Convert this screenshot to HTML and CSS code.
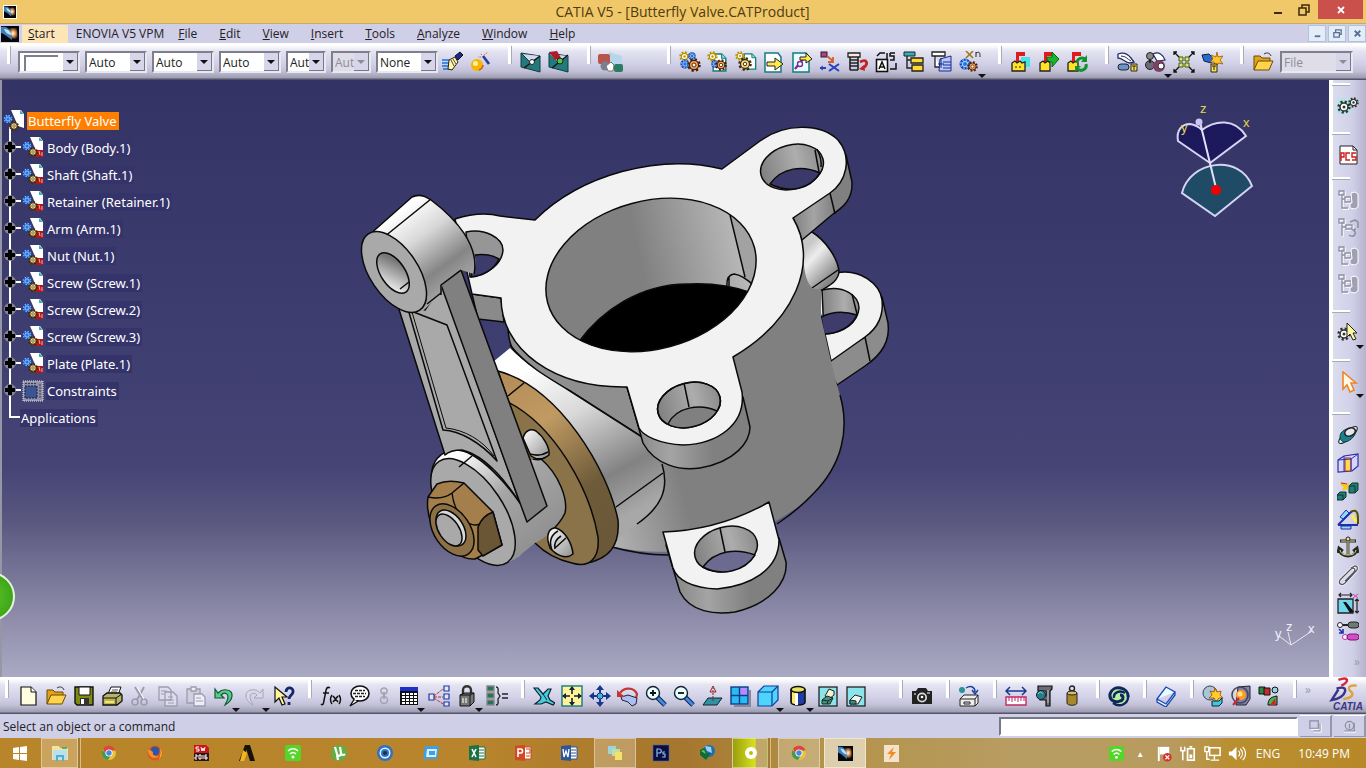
FILE: index.html
```
<!DOCTYPE html>
<html lang="en">
<head>
    <meta charset="UTF-8">
    <meta name="viewport" content="width=device-width, initial-scale=1.0">
    <title>CATIA V5 - [Butterfly Valve.CATProduct]</title>
    <link rel="stylesheet" href="styles.css">
</head>
<body>
    <!-- icon sprite -->
    <svg class="sprite" aria-hidden="true">
        <defs>
            <radialGradient id="glow" cx=".55" cy=".45" r=".55">
                <stop offset="0" stop-color="#fff"/><stop offset=".35" stop-color="#f5a35a"/><stop offset="1" stop-color="#05070d"/>
            </radialGradient>
        </defs>
        <symbol id="catia" viewBox="0 0 18 16" preserveAspectRatio="none"><rect width="18" height="16" fill="#05070d"/><path d="M6 2h10l1 12-7-2z" fill="url(#glow)"/><path d="M0 1c5-1 8 1 10 5l1 8C8 12 4 8 0 7z" fill="#3d7fb8"/><path d="M3 3c4 0 6 2 8 6-4 0-7-3-8-6z" fill="#b9e0f6"/></symbol>
        <symbol id="gear" viewBox="0 0 12 12"><circle cx="6" cy="6" r="4.5" fill="none" stroke="currentColor" stroke-width="2.4" stroke-dasharray="1.8 1.73"/><circle cx="6" cy="6" r="3.4" fill="#fff" stroke="currentColor" stroke-width="1.3"/><circle cx="6" cy="6" r="1.3" fill="currentColor"/></symbol>
        <symbol id="bgear" viewBox="0 0 12 12"><circle cx="6" cy="6" r="5.500" fill="#1746a8"/><circle cx="6" cy="6" r="4.300" fill="none" stroke="#6fb2ff" stroke-width="1.600" stroke-dasharray="1.800 1.580"/><circle cx="6" cy="6" r="2.600" fill="#2a6fe8" stroke="#9fd0ff" stroke-width="1.200"/></symbol>
        <symbol id="ygear" viewBox="0 0 12 12"><circle cx="6" cy="6" r="4.5" fill="none" stroke="#3d2b00" stroke-width="2.6" stroke-dasharray="1.8 1.73"/><circle cx="6" cy="6" r="3.8" fill="#ffd98a" stroke="#3d2b00" stroke-width="1"/><circle cx="6" cy="6" r="1.5" fill="#fff" stroke="#3d2b00" stroke-width=".8"/></symbol>
        <symbol id="ogear" viewBox="0 0 12 12"><circle cx="6" cy="6" r="4.5" fill="none" stroke="#4a1f00" stroke-width="2.6" stroke-dasharray="1.8 1.73"/><circle cx="6" cy="6" r="3.900" fill="#f3a25a" stroke="#4a1f00" stroke-width="1"/><circle cx="6" cy="6" r="1.700" fill="#fff" stroke="#4a1f00" stroke-width=".8"/></symbol>
        <symbol id="doc" viewBox="0 0 14 18"><path d="M1 1h8l4 4v12H1z" fill="#fff" stroke="#127c80" stroke-width="1.4"/><path d="M9 1v4h4" fill="#7fe6e6" stroke="#127c80"/></symbol>
        <symbol id="tree-product" viewBox="0 0 22 22"><path d="M8 0h10l3 4v14l-6-2z" fill="#fff"/><path d="M17 0l4 4h-4z" fill="#37b0b8"/><use href="#bgear" x="0" y="4" width="10" height="10"/><use href="#ygear" x="6" y="11" width="10" height="10"/></symbol>
        <symbol id="tree-part" viewBox="0 0 22 22"><path d="M8 0h10l3 4v14l-6-2z" fill="#fff"/><path d="M17 0l4 4h-4z" fill="#37b0b8"/><path d="M13 13h8v7h-8z" fill="#b81616"/><path d="M17 14l1 4M20 15v4" stroke="#f0b0a0"/><use href="#bgear" x="0" y="4" width="10" height="10"/><use href="#ygear" x="6" y="10" width="10" height="10"/></symbol>
        <symbol id="tree-constraints" viewBox="0 0 22 22"><rect x="1" y="1" width="20" height="20" fill="#8f8fa6" stroke="#e2e2ea" stroke-dasharray="1 1"/><rect x="3" y="6" width="12" height="12" fill="#3c5590" stroke="#0c1c50" stroke-dasharray="2 1"/><path d="M18 4v15M3 3.500h12" stroke="#3a3a4a" stroke-dasharray="2 1"/></symbol>

        <!-- top toolbar -->
        <symbol id="brush" viewBox="0 0 22 22"><path d="M0 9h8M0 12h10M0 15h12M1 18h9" stroke="#1673e0" stroke-width="1.6"/><path d="M7 9l6-3 3 5-6 8-4-1z" fill="#fff6a8" stroke="#222"/><path d="M9 9l3 6M11 8l3 5" stroke="#222" stroke-width=".8"/><path d="M13 5l5-4 3 3-5 5z" fill="#182a8c" stroke="#111"/></symbol>
        <symbol id="wand" viewBox="0 0 22 22"><circle cx="7" cy="14" r="6" fill="#f6b500"/><circle cx="5.500" cy="12.500" r="2.500" fill="#fff3a0"/><path d="M9 19a6 6 0 0 0 4-5" stroke="#d2551b" fill="none" stroke-width="1.500"/><path d="M13 5l6 8" stroke="#2b3d96" stroke-width="2.600"/><path d="M12 4l-2-2M14 4l4-3M11 6H8" stroke="#d96a38" stroke-dasharray="1.500 1"/></symbol>
        <symbol id="bowtie" viewBox="0 0 22 22"><path d="M1 2l19 3v16L1 16z" fill="#24797d" stroke="#103f42"/><path d="M2 3l8 8 10-6z" fill="#d9d8ea"/><path d="M1 2l9 9" stroke="#103f42"/><path d="M4 17L20 5" stroke="#111" stroke-width="1.400"/><circle cx="12" cy="11" r="2.500" fill="#fff" stroke="#222"/></symbol>
        <symbol id="bowtie-x" viewBox="0 0 22 22"><path d="M1 2l19 3v16L1 16z" fill="#24797d" stroke="#103f42"/><path d="M2 3l8 8 10-6z" fill="#d9d8ea"/><path d="M1 1l8-1 4 7-6 2z" fill="#b0182c"/><path d="M4 17L20 4" stroke="#111" stroke-width="1.400"/><circle cx="12" cy="10" r="3" fill="#47c947" stroke="#222"/></symbol>
        <symbol id="render" viewBox="0 0 26 22"><path d="M12 1l13 4v12l-13-4z" fill="#b7d6ea"/><rect x="1" y="3" width="12" height="10" rx="2" fill="#b9554f"/><circle cx="8" cy="15" r="4.500" fill="#7a7f96"/><rect x="17" y="13" width="9" height="8" rx="2" fill="#2c7b64"/><path d="M9 15l5-4 3 3-1 6h-5z" fill="#fff" stroke="#777"/></symbol>
        <symbol id="gears" viewBox="0 0 22 22"><use href="#gear" x="0" y="0" width="11" height="11" color="#b79300"/><use href="#bgear" x="1" y="8" width="10" height="10"/><use href="#bgear" x="9" y="1" width="8" height="8"/><use href="#ogear" x="8" y="7" width="14" height="14"/></symbol>
        <symbol id="gear-doc" viewBox="0 0 22 22"><use href="#doc" x="4" y="2" width="17" height="19"/><use href="#gear" x="0" y="0" width="11" height="11" color="#b79300"/><use href="#bgear" x="4" y="9" width="8" height="8"/><use href="#ogear" x="8" y="8" width="12" height="12"/></symbol>
        <symbol id="gear-doc2" viewBox="0 0 22 22"><use href="#doc" x="8" y="2" width="14" height="17"/><use href="#gear" x="0" y="0" width="10" height="10" color="#b79300"/><use href="#ygear" x="3" y="6" width="14" height="14"/></symbol>
        <symbol id="doc-arrow" viewBox="0 0 22 22"><path d="M2 2h13l3 4v15H2z" fill="#fff" stroke="#127c80" stroke-width="1.500"/><path d="M4 11h8V7l8 6-8 6v-4H4z" fill="#ffe94d" stroke="#222"/></symbol>
        <symbol id="doc-arrow2" viewBox="0 0 22 22"><path d="M2 2h13l3 4v15H2z" fill="#eafcff" stroke="#127c80" stroke-width="1.500"/><path d="M4 18l4-5 5-6" stroke="#7a2a9c" fill="none" stroke-width="2.200"/><path d="M9 6h6V2l6 6-6 4V9H9z" fill="#ffe94d" stroke="#222"/><circle cx="9" cy="13" r="2.500" fill="#fff" stroke="#7a2a9c" stroke-width="1.400"/></symbol>
        <symbol id="reorder" viewBox="0 0 22 22"><rect x="2" y="1" width="6" height="5" fill="#b43c8c" stroke="#222"/><path d="M8 5l6 5m0-4v5h-5" stroke="#d0602a" fill="none" stroke-width="1.800"/><path d="M1 17h6M10 13l10 7M10 20l10-7" stroke="#2443b8" stroke-width="2"/><path d="M4 15l-3 2 3 2" fill="none" stroke="#2443b8"/></symbol>
        <symbol id="list-red" viewBox="0 0 22 22"><path d="M1 2h12v4H1z" fill="#f3efe0" stroke="#222" stroke-width="1.300"/><path d="M3 9h8M3 12h8M3 15h8M3 19h8M3 6v13M11 6v13" stroke="#222" stroke-width="1.600"/><path d="M13 11c7-4 9 2 3 6" stroke="#c22222" fill="none" stroke-width="2.800"/><path d="M12 18l5-4 1 6z" fill="#c22222"/></symbol>
        <symbol id="numbering" viewBox="0 0 22 22"><rect x="1.500" y="8.500" width="11" height="12" fill="#fff" stroke="#111" stroke-width="1.600"/><path d="M4 18l3-7 3 7M5 16h4" stroke="#111" fill="none" stroke-width="1.500"/><path d="M12 2v7M15 2h5M15 2v3h4v4h-4M2 5l3-3h5M21 12v6h-6" stroke="#111" fill="none" stroke-width="1.500"/></symbol>
        <symbol id="tree-yellow" viewBox="0 0 22 22"><path d="M1 1h11v4H1z" fill="#2fb1b8" stroke="#222"/><path d="M4 5v12h5M4 9h5" stroke="#222" fill="none" stroke-width="1.400"/><path d="M8 7h12v5H8zM9 14h11v6H9z" fill="#ffd92f" stroke="#222" stroke-width="1.300"/></symbol>
        <symbol id="tree-blue" viewBox="0 0 22 22"><path d="M1 1h13v4H1zM4 5v11h5" fill="#fff" stroke="#222" stroke-width="1.300"/><path d="M9 8l11-3v15H8z" fill="#b9c8ff" stroke="#1b2a88"/><path d="M10 7v10M7 13h6M12 11h8M12 14h8M12 17h8" stroke="#1b2a88"/></symbol>
        <symbol id="multi" viewBox="0 0 22 22"><path d="M7 0l7 7M14 0L7 7" stroke="#a07b1c" stroke-width="1.600"/><path d="M17 6V1m0 1c4-2 4 0 4 4" stroke="#223" fill="none"/><use href="#bgear" x="0" y="7" width="12" height="12"/><use href="#ogear" x="8" y="10" width="11" height="11"/></symbol>
        <symbol id="store" viewBox="0 0 22 22"><path d="M6 1h9v4h-6v7H6z" fill="#e11b1b"/><path d="M11 6h9v10h-9z" fill="#49e2e6"/><path d="M2 12l3-2 2 2 3-2 2 2 3-1v9H2z" fill="#ffe326" stroke="#222" stroke-width="1.300"/><path d="M5 16h2M9 16h2" stroke="#222"/></symbol>
        <symbol id="store-arrow" viewBox="0 0 22 22"><path d="M6 1h9v4h-6v7H6z" fill="#e11b1b"/><path d="M9 6h5V1l7 7-7 8v-5H9z" fill="#17b52a" stroke="#0b6414"/><path d="M2 12l3-2 2 2 3-2 2 2v8H2z" fill="#ffe326" stroke="#222" stroke-width="1.300"/></symbol>
        <symbol id="store-sync" viewBox="0 0 22 22"><path d="M6 1h9v4h-6v7H6z" fill="#e11b1b"/><path d="M2 12l3-2 2 2 3-2 2 2v8H2z" fill="#ffe326" stroke="#222" stroke-width="1.300"/><path d="M11 12a5 5 0 0 1 8-4M20 13a5 5 0 0 1-9 4" stroke="#12922a" stroke-width="3" fill="none"/><path d="M21 4v7h-6zM9 21v-6h6z" fill="#12922a"/></symbol>
        <symbol id="hand" viewBox="0 0 22 22"><path d="M1 3c5-2 9-1 13 4l3 4-4 1C8 12 6 7 1 7z" fill="#fff" stroke="#222b66" stroke-width="1.300"/><path d="M4 5c5 0 6 3 10 5" fill="none" stroke="#222b66"/><rect x="1" y="13" width="11" height="6" rx="3" fill="#6a93c8" stroke="#223"/><path d="M14 13h6v7h-6z" fill="#ffe04a" stroke="#222"/><path d="M15 15h4M17 15v4" stroke="#222"/></symbol>
        <symbol id="hand-ball" viewBox="0 0 22 22"><path d="M8 3c6-3 10 1 12 6l-8 1z" fill="#fff" stroke="#222b66" stroke-width="1.200"/><circle cx="5" cy="5" r="3.500" fill="#888" stroke="#222"/><circle cx="5" cy="14" r="4.500" fill="#6b6b78" stroke="#222"/><path d="M5 8v4" stroke="#222" stroke-width="2"/><circle cx="14" cy="15" r="6" fill="#7d4066"/><circle cx="16" cy="15" r="3" fill="#fff" stroke="#333"/></symbol>
        <symbol id="explode" viewBox="0 0 22 22"><path d="M1 1l5 5M21 1l-5 5M1 21l5-5M21 21l-5-5M1 4V1h3M18 1h3v3M1 18v3h3M18 21h3v-3" stroke="#111" fill="none" stroke-width="1.300"/><path d="M6 6h4v4H6zM12 6h4v4h-4zM6 12h4v4H6zM12 12h4v4h-4z" fill="#e9e35a" stroke="#3b5a1b"/></symbol>
        <symbol id="clash" viewBox="0 0 22 22"><path d="M1 4l7-1 5 5-3 4-7-2z" fill="#276ad4" stroke="#123"/><path d="M16 1l1 5 5-1-3 4 3 4-5-1-2 4-2-5-4 0 3-3-2-4 5 2z" fill="#ffc52a" stroke="#9a5a00" stroke-width=".8"/><path d="M10 13h6v8h-6z" fill="#ffe04a" stroke="#222"/><path d="M11 15h4M13 15v4" stroke="#222"/></symbol>
        <symbol id="folder" viewBox="0 0 22 22"><path d="M2 19V5h6l2 2h8v4" fill="#e0a31a" stroke="#6b4a00"/><path d="M2 19l4-9h15l-4 9z" fill="#ffd34e" stroke="#6b4a00"/><path d="M12 3c3-2 6-1 7 2" fill="none" stroke="#333"/></symbol>

        <!-- bottom toolbar -->
        <symbol id="new" viewBox="0 0 22 22"><path d="M4 2h10l5 5v13H4z" fill="#fffde0" stroke="#111" stroke-width="1.200"/><path d="M14 2v5h5" fill="#fff" stroke="#111"/></symbol>
        <symbol id="save" viewBox="0 0 22 22"><path d="M2 2h18v18H4l-2-2z" fill="#7f8a12" stroke="#111" stroke-width="1.400"/><path d="M6 2h11v8H6z" fill="#fff" stroke="#111"/><path d="M7 13h9v7H7z" fill="#333"/><path d="M8 14h3v5H8z" fill="#fff"/></symbol>
        <symbol id="print" viewBox="0 0 22 22"><path d="M7 9l3-7h10l-3 8z" fill="#fff" stroke="#111"/><path d="M11 5h6M10 7h6" stroke="#555"/><path d="M2 11l4-3h13l2 2v6l-5 4H2z" fill="#b7b46a" stroke="#111" stroke-width="1.300"/><path d="M2 13h13v7M15 13l6-4" fill="none" stroke="#111"/><path d="M4 16h9v2H4z" fill="#ffe84a"/></symbol>
        <symbol id="cut" viewBox="0 0 22 22"><path d="M6 2l8 13M15 2L8 15" stroke="#9c9cae" stroke-width="2"/><circle cx="6" cy="17" r="3" fill="none" stroke="#9c9cae" stroke-width="1.600"/><circle cx="15" cy="17" r="3" fill="none" stroke="#9c9cae" stroke-width="1.600"/><path d="M8 2l7 12" stroke="#fff"/></symbol>
        <symbol id="copy" viewBox="0 0 22 22"><path d="M2 2h9l3 3v10H2zM8 7h8l4 4v10H8z" fill="#dddcec" stroke="#9c9cae" stroke-width="1.300"/><path d="M4 6h6M4 9h3M11 12h5M11 15h6M11 18h6" stroke="#9c9cae"/></symbol>
        <symbol id="paste" viewBox="0 0 22 22"><path d="M2 4h13v14H2z" fill="#d0cfe0" stroke="#9c9cae" stroke-width="1.300"/><path d="M6 2h5v4H6zM9 9h8l3 3v9H9z" fill="#eeeef8" stroke="#9c9cae" stroke-width="1.300"/><path d="M11 13h5M11 16h7" stroke="#9c9cae"/></symbol>
        <symbol id="undo" viewBox="0 0 22 22"><path d="M2 4v9h9L8 10c4-4 9-1 6 6l-2 4c9-5 9-14 2-15-4-1-7 1-9 3z" fill="#5fc98a" stroke="#0f5a38" stroke-width="1.200"/></symbol>
        <symbol id="redo" viewBox="0 0 22 22"><path d="M20 4v9h-9l3-3c-4-4-9-1-6 6l2 4C1 15 1 6 8 5c4-1 7 1 9 3z" fill="#d9d8e8" stroke="#a6a5b8"/></symbol>
        <symbol id="whats" viewBox="0 0 22 22"><path d="M2 2v15l4-4 3 7 3-1-3-7h5z" fill="#fff59a" stroke="#111" stroke-width="1.200"/><path d="M13 7c0-6 8-5 7 0 0 3-4 3-4 7M16 17v3" stroke="#13256e" fill="none" stroke-width="2.800"/></symbol>
        <symbol id="fx" viewBox="0 0 22 22"><path d="M10 3c-3-2-4 1-4.500 5l-2 10c-.5 2-1.500 2-2.500 1M3 8h6M12 10c-2 3-2 6 0 9M19 10c2 3 2 6 0 9M13 11l5 6M18 11l-5 6" fill="none" stroke="#111" stroke-width="1.500"/></symbol>
        <symbol id="comment" viewBox="0 0 22 22"><path d="M7 13l-5 8 10-6z" fill="#fff" stroke="#111" stroke-width="1.400"/><ellipse cx="12" cy="8.500" rx="9" ry="7.500" fill="#fff" stroke="#111" stroke-width="1.600"/><path d="M7 15l3-2" stroke="#fff" stroke-width="2"/><path d="M7 5.500h10M5 8.500h13M7 11.500h10" stroke="#222" stroke-width="1.300" stroke-dasharray="3 1"/></symbol>
        <symbol id="lock-sm" viewBox="0 0 16 22"><circle cx="8" cy="6" r="3" fill="none" stroke="#a3a3b4" stroke-width="1.500"/><circle cx="8" cy="15" r="3.500" fill="none" stroke="#a3a3b4" stroke-width="1.500"/><path d="M8 7v7" stroke="#a3a3b4" stroke-width="2"/></symbol>
        <symbol id="table" viewBox="0 0 22 22"><rect x="2" y="2" width="18" height="18" fill="#111"/><rect x="2" y="2" width="18" height="4" fill="#1f30c8"/><path d="M4 8h3v2H4zM8 8h3v2H8zM12 8h3v2h-3zM16 8h3v2h-3zM4 11h3v2H4zM8 11h3v2H8zM12 11h3v2h-3zM16 11h3v2h-3zM4 14h3v2H4zM8 14h3v2H8zM12 14h3v2h-3zM16 14h3v2h-3zM4 17h3v2H4zM8 17h3v2H8zM12 17h3v2h-3zM16 17h3v2h-3z" fill="#fff"/></symbol>
        <symbol id="graph" viewBox="0 0 22 22"><path d="M1 9h5v6H1zM16 1h5v5h-5zM16 9h5v5h-5zM16 17h5v4h-5z" fill="#dfe6ff" stroke="#223a9c" stroke-width="1.200"/><path d="M6 11l9-7M6 12h9M6 13l9 6" stroke="#b03428" stroke-dasharray="3 1"/></symbol>
        <symbol id="lock" viewBox="0 0 22 22"><path d="M7 10V5c0-5 8-5 8 0v6" fill="none" stroke="#333" stroke-width="2.400"/><path d="M4 10l5-2h9v9l-4 4H4z" fill="#777" stroke="#111"/><path d="M4 10h10v11M14 10l4-2" stroke="#111" fill="none"/><path d="M7 13v5M10 13v5" stroke="#ddd" stroke-width="1.400"/></symbol>
        <symbol id="equiv" viewBox="0 0 22 22"><path d="M1 1h7v5H1zM1 8h7v5H1zM1 15h7v5H1z" fill="#23745d" stroke="#888" stroke-width="1.400"/><path d="M10 2c3 0 2 3 2 6l2 3-2 3c0 3 1 6-2 6M16 9h6M16 13h6" stroke="#222" fill="none" stroke-width="1.300"/></symbol>
        <symbol id="fly" viewBox="0 0 22 22"><path d="M1 3l4 0 5 6 5-5 3 0-3 7 2 4 5 3-2 2-7-3-5 2-6 0 5-4 1-3z" fill="#47cdd8" stroke="#123" stroke-width="1.200"/><path d="M10 9l4 6" stroke="#123"/></symbol>
        <symbol id="fit" viewBox="0 0 22 22"><rect x="1" y="1" width="20" height="20" fill="#fff39a" stroke="#127c80" stroke-width="1.400"/><path d="M11 3v6M11 13v6M3 11h6M13 11h6" stroke="#123" stroke-width="1.600"/><path d="M11 1l3 4H8zM11 21l3-4H8zM1 11l4-3v6zM21 11l-4-3v6z" fill="#123"/></symbol>
        <symbol id="pan" viewBox="0 0 22 22"><path d="M11 1v20M1 11h20" stroke="#17368e" stroke-width="2"/><path d="M11 0l4 5H7zM11 22l4-5H7zM0 11l5-4v8zM22 11l-5-4v8z" fill="#17368e"/><circle cx="11" cy="11" r="3" fill="#42b6cf" stroke="#17368e"/></symbol>
        <symbol id="rotate" viewBox="0 0 22 22"><path d="M3 8c4-6 14-6 17 1l-1 4" fill="none" stroke="#c23636" stroke-width="2.200"/><path d="M4 12l7-2 9 3-1 6-4 2-4-4-6-2z" fill="#a9c0f0" stroke="#223"/><path d="M0 5v7h8z" fill="#c23636"/></symbol>
        <symbol id="zoom-in" viewBox="0 0 22 22"><path d="M12 12l8 8" stroke="#123" stroke-width="5"/><path d="M12 12l8 8" stroke="#3f8af0" stroke-width="3"/><circle cx="8" cy="8" r="6.500" fill="#e9ffff" stroke="#123" stroke-width="1.400"/><path d="M8 5v6M5 8h6" stroke="#111" stroke-width="1.800"/></symbol>
        <symbol id="zoom-out" viewBox="0 0 22 22"><path d="M12 12l8 8" stroke="#123" stroke-width="5"/><path d="M12 12l8 8" stroke="#3f8af0" stroke-width="3"/><circle cx="8" cy="8" r="6.500" fill="#e9ffff" stroke="#123" stroke-width="1.400"/><path d="M5 8h6" stroke="#111" stroke-width="1.800"/></symbol>
        <symbol id="normal" viewBox="0 0 22 22"><path d="M2 20l5-7h14l-5 7z" fill="#2f93a0" stroke="#123"/><path d="M12 16V3" stroke="#822" stroke-dasharray="2 1"/><path d="M12 1l3 6H9z" fill="none" stroke="#922"/></symbol>
        <symbol id="views" viewBox="0 0 22 22"><path d="M5 21h16V5" stroke="#889" fill="none" stroke-width="2"/><rect x="2" y="2" width="17" height="17" fill="#28bdf2" stroke="#113a8c" stroke-width="1.400"/><rect x="11" y="3" width="7" height="7" fill="#b48aff"/><path d="M10.500 2v17M2 10.500h17" stroke="#113a8c" stroke-width="1.400"/></symbol>
        <symbol id="cube" viewBox="0 0 22 22"><path d="M1 7l6-6h14v14l-6 6H1z" fill="#4fd3ff" stroke="#123c96" stroke-width="1.200"/><path d="M1 7h14v14M15 7l6-6" fill="none" stroke="#123c96" stroke-width="1.200"/></symbol>
        <symbol id="shading" viewBox="0 0 22 22"><path d="M4 5v12c0 4 14 4 14 0V5z" fill="#1f3da8" stroke="#111" stroke-width="1.600"/><path d="M5 7h3v12c-2 0-3-1-3-2z" fill="#ffe95e"/><path d="M8 8h3v12H8z" fill="#fff"/><ellipse cx="11" cy="4.500" rx="7" ry="3" fill="#e6e35d" stroke="#111" stroke-width="1.600"/></symbol>
        <symbol id="hide" viewBox="0 0 22 22"><rect x="2" y="2" width="18" height="19" fill="#8be4ea" stroke="#222" stroke-width="1.300"/><path d="M8 11l4-7 5 2v4l-5 4z" fill="#f4f0d0" stroke="#222"/><path d="M5 15l5-4 6 2-3 6H5z" fill="#3c9480" stroke="#222"/><path d="M5 15l6 1 5-3M11 16l-1 3" fill="none" stroke="#222"/></symbol>
        <symbol id="swap" viewBox="0 0 22 22"><rect x="2" y="2" width="18" height="19" fill="#8be4ea" stroke="#222" stroke-width="1.300"/><path d="M5 15l5-5 7 2-4 7H5z" fill="#f0f4f0" stroke="#222"/><path d="M5 15l6 1v3H5z" fill="#3c9480" stroke="#222"/></symbol>
        <symbol id="camera" viewBox="0 0 22 22"><path d="M1 6h4l2-3h8l2 3h4v13H1z" fill="#222"/><circle cx="11" cy="12.500" r="5" fill="#ddd"/><circle cx="11" cy="12.500" r="3.300" fill="#222"/><circle cx="11" cy="12" r="1.300" fill="#fff"/><path d="M3 9h2M16 8h3" stroke="#fff"/></symbol>
        <symbol id="catalog" viewBox="0 0 22 22"><circle cx="4" cy="5" r="3" fill="#2b9299"/><path d="M8 3c5-3 9-1 9 4m-3-2l3 4 3-4" stroke="#1d3ea0" fill="none" stroke-width="1.400"/><path d="M2 14l4-4h14v8l-3 3H2z" fill="#eee" stroke="#222"/><path d="M2 14h15v7M17 14l3-4M6 17h6v2H6z" fill="none" stroke="#222"/></symbol>
        <symbol id="measure" viewBox="0 0 22 22"><path d="M1 6h20M5 2L1 6l4 4M17 2l4 4-4 4" fill="none" stroke="#15388c" stroke-width="1.500"/><path d="M1 12h20v8H1z" fill="#fff" stroke="#c22864" stroke-width="1.400"/><path d="M4 12v4M7 12v5M10 12v4M13 12v5M16 12v4M19 12v4" stroke="#c22864"/></symbol>
        <symbol id="caliper" viewBox="0 0 22 22"><path d="M5 1h14v3l-2 2v15h-4v-6H7v-4h6V6H5z" fill="#6c6c74" stroke="#111" stroke-width="1.200"/><circle cx="8" cy="10" r="4.500" fill="#267c8a" stroke="#123"/><path d="M5 9c2-3 4-2 5 0" stroke="#8cdde2" fill="none"/><path d="M15 5v13" stroke="#ccc"/></symbol>
        <symbol id="weight" viewBox="0 0 22 22"><circle cx="11" cy="3.500" r="2.500" fill="none" stroke="#222" stroke-width="1.400"/><path d="M6 8h10v10c0 3-10 3-10 0z" fill="#a8882b" stroke="#222"/><ellipse cx="11" cy="8" rx="5" ry="2" fill="#d7bd5e" stroke="#222"/></symbol>
        <symbol id="swirl" viewBox="0 0 22 22"><ellipse cx="11" cy="11" rx="10" ry="9" fill="#b7f0a4"/><path d="M20 12c1-10-15-13-18-3-1 7 6 9 10 7 4-1 4-6 0-6" fill="none" stroke="#10265c" stroke-width="3"/><path d="M5 18c7 5 16 1 15-8M6 13c-1-6 6-8 11-5" fill="none" stroke="#10265c" stroke-width="2.400"/></symbol>
        <symbol id="book" viewBox="0 0 22 22"><path d="M2 14l9-12 9 5-9 12zM2 14v3l9 5 9-12V7" fill="#e9fbff" stroke="#1b49b4" stroke-width="1.300"/></symbol>
        <symbol id="star-cube" viewBox="0 0 22 22"><circle cx="8" cy="8" r="7" fill="#a9c6d8" stroke="#345"/><path d="M13 3l2 4 4-1-1 4 3 3-4 0-3 4-2-4-5 0 3-3-2-4 4 1z" fill="#ffd02b" stroke="#a33c00" stroke-width=".8"/><path d="M10 16h7l3-3v5l-3 3h-7z" fill="#3fc7dc" stroke="#123"/></symbol>
        <symbol id="sphere" viewBox="0 0 22 22"><path d="M8 2l12-1v13l-4 6H6z" fill="#7d84a8" stroke="#223"/><circle cx="10" cy="10" r="8" fill="none" stroke="#445" stroke-width="1.500"/><circle cx="11" cy="10" r="5" fill="#ff9b27"/><circle cx="10" cy="9" r="2.500" fill="#ffe27d"/><path d="M3 20l6-7" stroke="#c23" stroke-width="2"/></symbol>
        <symbol id="blocks" viewBox="0 0 22 22"><path d="M1 2h6v7H1z" fill="#2a8a3c" stroke="#111"/><path d="M6 3h6v7H6z" fill="#c22c2c" stroke="#111"/><circle cx="17" cy="5" r="3" fill="#9ad0e4" stroke="#111"/><path d="M10 20c0-5 2-8 9-9v9z" fill="#48b54e" stroke="#111"/><path d="M12 20l5-7 1 7z" fill="#c22c2c"/></symbol>

        <!-- right toolbar -->
        <symbol id="dark-gears" viewBox="0 0 22 22"><rect x="0" y="3" width="14" height="16" fill="#b9e2e6"/><use href="#gear" x="0" y="5" width="14" height="14" color="#2b3a33"/><use href="#gear" x="11" y="2" width="11" height="11" color="#2b3a33"/></symbol>
        <symbol id="pcs" viewBox="0 0 22 22"><path d="M3 2h13l4 4v14H3z" fill="#fff" stroke="#222"/><path d="M16 2v4h4" fill="none" stroke="#222"/><path d="M4 17V9h3v4H4M13 9H9v7h4M19 9h-4v4h4v3h-4" fill="none" stroke="#d11919" stroke-width="1.400"/></symbol>
        <symbol id="ghost" viewBox="0 0 22 22"><path d="M3 3h5v4H3zM6 7v13h6M6 11h3M9 9h6v5H9z" fill="none" stroke="#fff" stroke-width="1.300"/><path d="M2 2h5v4H2zM5 6v13h6M5 10h3M8 8h6v5H8z" fill="none" stroke="#8f8fa4" stroke-width="1.300"/><path d="M14 4l4-1 3 2v13l-3 2-5-1v-5h2z" fill="#a0a0b2" stroke="#fff"/></symbol>
        <symbol id="ghost-arrow" viewBox="0 0 22 22"><path d="M3 3h5v4H3zM6 7v13M6 11h4M10 9h6v4h-6z" fill="none" stroke="#fff" stroke-width="1.300"/><path d="M2 2h5v4H2zM5 6v13M5 10h4M9 8h6v4H9z" fill="none" stroke="#8f8fa4" stroke-width="1.300"/><path d="M13 5l5-2 3 2v6M12 18c5 4 9-3 4-5l3-1" fill="none" stroke="#8f8fa4" stroke-width="1.600"/></symbol>
        <symbol id="select-gear" viewBox="0 0 22 22"><use href="#gear" x="0" y="5" width="14" height="14" color="#333"/><path d="M10 1v14l3-3 3 6 3-1-3-6h4z" fill="#fff6a0" stroke="#222"/></symbol>
        <symbol id="pointer" viewBox="0 0 22 22"><path d="M6 1v17l4-4 3 7 4-2-3-7h5z" fill="#fffbe8" stroke="#f08327" stroke-width="1.600"/></symbol>
        <symbol id="coincidence" viewBox="0 0 22 22"><ellipse cx="11" cy="11" rx="12" ry="4" transform="rotate(-42 11 11)" fill="#d5f3f5" stroke="#222"/><path d="M4 9c4-5 11-6 15-2-1 6-7 11-12 11-4-1-5-5-3-9z" fill="#1b8087" stroke="#0d3c40"/><ellipse cx="13" cy="8" rx="5.500" ry="3.800" transform="rotate(-25 13 8)" fill="#e8e4ee" stroke="#222" stroke-width="1.600"/></symbol>
        <symbol id="contact" viewBox="0 0 22 22"><path d="M1 8l6-4 14-2v12l-6 5-14 1z" fill="#d9d4ff" stroke="#2a2fa8" stroke-width="1.200"/><path d="M8 6h6v13H8z" fill="#ffd94d" stroke="#a33"/><path d="M1 8l13-1 7-5M14 7v12M7 4v15" fill="none" stroke="#2a2fa8"/></symbol>
        <symbol id="offset" viewBox="0 0 22 22"><path d="M0 15l3-3h6v5l-3 3H0zM12 6l3-3h6v7l-3 3h-6z" fill="#237c74" stroke="#0d3430"/><path d="M12 6h6v7M0 15h6v5" fill="none" stroke="#0d3430"/><path d="M4 3l7 6M6 10l6-6" stroke="#f2cc10" stroke-width="2.400"/><path d="M4 3l6 1" stroke="#c22"/></symbol>
        <symbol id="angle" viewBox="0 0 22 22"><path d="M1 17h20M1 17L15 3" stroke="#1c2fae" stroke-width="2"/><path d="M4 18h10v3H4zM3 9l6-7 3 3-6 6z" fill="#8fd9f2" stroke="#1c2fae"/><path d="M14 4c5-3 7 0 7 6v6" stroke="#555000" fill="none" stroke-width="2"/><path d="M15 7l4 7" stroke="#ffe94d" stroke-width="3"/></symbol>
        <symbol id="anchor" viewBox="0 0 22 22"><path d="M11 4v16M3 5h16M2 13c1 5 5 7 9 7s8-2 9-7M1 17l1-5 4 3M21 17l-1-5-4 3" fill="none" stroke="#222b1c" stroke-width="2.800"/><path d="M11 3v16M4 5h14M3 14c1 4 4 5 8 5s7-1 8-5" fill="none" stroke="#e8e4a0"/><circle cx="11" cy="3" r="2" fill="#e8e4a0" stroke="#222"/></symbol>
        <symbol id="clip" viewBox="0 0 22 22"><path d="M14 4l4-2c3 0 3 3 1 5L8 19c-3 3-7 1-5-3L14 5c3-2 5 0 3 3L8 17" fill="none" stroke="#fff" stroke-width="2.600"/><path d="M14 4l4-2c3 0 3 3 1 5L8 19c-3 3-7 1-5-3L14 5c3-2 5 0 3 3L8 17" fill="none" stroke="#555564" stroke-width="1.300"/></symbol>
        <symbol id="quick" viewBox="0 0 22 22"><path d="M2 3h13M4 1L2 3l2 2M13 1l2 2-2 2M20 7v14M18 9l2-2 2 2M18 19l2 2 2-2" fill="none" stroke="#222" stroke-width="1.200"/><path d="M16 2l5 4M16 6l5-4" stroke="#d83ab0"/><path d="M1 7h15v14H1z" fill="#6fd7ee" stroke="#222" stroke-width="1.300"/><path d="M6 10l3 0 8 10-4 1z" fill="#111"/></symbol>
        <symbol id="flexible" viewBox="0 0 22 22"><circle cx="3" cy="5" r="2.500" fill="#fff" stroke="#222"/><path d="M6 5h5" stroke="#222" stroke-width="2"/><rect x="11" y="2" width="11" height="6" rx="3" fill="#6d7a76" stroke="#222"/><path d="M2 9l4 4m0-4v4H2" stroke="#1d2fae" stroke-width="1.600" fill="none"/><circle cx="8" cy="17" r="2.500" fill="#fff" stroke="#c12cb0"/><rect x="10" y="14" width="12" height="6" rx="3" fill="#d54bc8" stroke="#7a1a70"/></symbol>

        <!-- taskbar -->
        <symbol id="windows" viewBox="0 0 20 20"><path d="M3 5l6-1v6H3zM10 4l7-1v7h-7zM3 11h6v6l-6-1zM10 11h7v7l-7-1z" fill="#fff"/></symbol>
        <symbol id="explorer" viewBox="0 0 20 20"><path d="M2 3h7l1 2h8v12H2z" fill="#f4e3a0"/><path d="M3 7h14v10H3z" fill="#b9e2ee"/><path d="M6 18v-6h8v6h-2v-4H8v4z" fill="#55aecb"/><path d="M12 4v2h5V4z" fill="#4fb06a"/></symbol>
        <symbol id="chrome" viewBox="0 0 20 20"><circle cx="10" cy="10" r="7" fill="#e8c33a"/><path d="M4 6a7 7 0 0 1 12.500 1.500H10L7 12z" fill="#d9483b"/><path d="M3.500 7A7 7 0 0 0 9 17l3-5-5-1z" fill="#3e9a55"/><circle cx="10" cy="10" r="3.600" fill="#fff"/><circle cx="10" cy="10" r="2.700" fill="#4a86e0"/></symbol>
        <symbol id="firefox" viewBox="0 0 20 20"><circle cx="10" cy="10" r="7.500" fill="#e2581c"/><circle cx="10" cy="8" r="4.500" fill="#2b57a8"/><path d="M3 7c2-1 3 1 5 2-1 3 2 5 6 4-3 4-11 2-11-6z" fill="#f3922a"/><path d="M15 5c3 4 2 9-1 11 2-4 2-7 1-11z" fill="#f9c43a"/></symbol>
        <symbol id="solidworks" viewBox="0 0 20 20"><path d="M3 2h12l3 3v5H3z" fill="#c9161b"/><path d="M3 10h15v8H3z" fill="#2a1410"/><path d="M8 4H5v2h3v2H5M10 4l1 4 1-3 1 3 1-4M4 12h2v2H4v2h2M8 12h2v4H8zM12 12v4M16 12h-2v4h2v-2h-2" fill="none" stroke="#fff"/></symbol>
        <symbol id="ansys" viewBox="0 0 20 20"><path d="M8 2h3L6 18H2z" fill="#15120c"/><path d="M8 2h5l5 16h-5z" fill="#15120c"/><path d="M6 7l4 3-3 8H3z" fill="#f2b71c"/></symbol>
        <symbol id="wifi" viewBox="0 0 20 20"><rect x="2" y="2" width="16" height="16" rx="2" fill="#55d429"/><path d="M5 8c3-3 7-3 10 0M7 11c2-2 4-2 6 0" stroke="#fff" fill="none" stroke-width="1.600"/><circle cx="10" cy="14" r="1.500" fill="#fff"/></symbol>
        <symbol id="utorrent" viewBox="0 0 20 20"><circle cx="10" cy="10" r="8" fill="#5fae46"/><path d="M6 4l2 7c1 3 4 2 4-1l-1-6M12 10c1 3 3 2 4 1M8 12l1 5" stroke="#fff" fill="none" stroke-width="2.200"/></symbol>
        <symbol id="eye" viewBox="0 0 20 20"><circle cx="10" cy="10" r="8" fill="#2d72c4"/><circle cx="10" cy="10" r="5.500" fill="#e8f4ff"/><circle cx="10" cy="10" r="4" fill="#2d72c4"/><circle cx="10" cy="10" r="2" fill="#1b2f54"/></symbol>
        <symbol id="window" viewBox="0 0 20 20"><path d="M4 3h14l-2 13H2z" fill="#3f9fe0"/><path d="M6 6h10l-1 8H5z" fill="#d5f0ff"/><path d="M8 8h6v4H8z" fill="#3f9fe0"/></symbol>
        <symbol id="excel" viewBox="0 0 20 20"><path d="M11 4h7v12h-7z" fill="#fff" stroke="#1e7145"/><path d="M12 7h5M12 10h5M12 13h5" stroke="#1e7145"/><path d="M2 3l10-1v16L2 17z" fill="#1e7145"/><path d="M5 6l4 8M9 6l-4 8" stroke="#fff" stroke-width="1.600"/></symbol>
        <symbol id="powerpoint" viewBox="0 0 20 20"><path d="M11 4h7v12h-7z" fill="#fff" stroke="#d24726"/><path d="M13 6h4v4h-4M13 13h4" stroke="#d24726" fill="none"/><path d="M2 3l10-1v16L2 17z" fill="#d24726"/><path d="M5 14V6h3c2 0 2 4 0 4H5" stroke="#fff" fill="none" stroke-width="1.600"/></symbol>
        <symbol id="word" viewBox="0 0 20 20"><path d="M11 4h7v12h-7z" fill="#fff" stroke="#2b579a"/><path d="M12 7h5M12 10h5M12 13h5" stroke="#2b579a"/><path d="M2 3l10-1v16L2 17z" fill="#2b579a"/><path d="M4 6l1 8 2-6 2 6 1-8" stroke="#fff" fill="none" stroke-width="1.300"/></symbol>
        <symbol id="notes" viewBox="0 0 20 20"><path d="M3 3h8v8H3z" fill="#9fd4d9"/><path d="M7 6h8v7H7z" fill="#bfe0a0"/><path d="M10 9h7v8h-7z" fill="#f4e26b"/></symbol>
        <symbol id="photoshop" viewBox="0 0 20 20"><rect x="2" y="2" width="16" height="16" fill="#0b0d3e" stroke="#3c6fb8" stroke-width=".6"/><path d="M6 14V6h2c3 0 3 4 0 4H6M14 9h-2v2h2v3h-3" stroke="#8bbcf4" fill="none" stroke-width="1.200"/></symbol>
        <symbol id="idm" viewBox="0 0 20 20"><circle cx="12" cy="8" r="6" fill="#1b6fae"/><path d="M8 3l6 1 1 6-5-2z" fill="#9fd0ee"/><path d="M3 7l4-2 3 5h4l-5 7-6-5z" fill="#0f6b3a"/><path d="M4 8l3-1 2 4z" fill="#76c34c"/></symbol>
        <symbol id="disc" viewBox="0 0 20 20"><circle cx="11" cy="10" r="6" fill="#fff"/><circle cx="11" cy="10" r="2" fill="#b9c000"/></symbol>
        <symbol id="flash" viewBox="0 0 20 20"><rect x="3" y="2" width="15" height="17" fill="#f4e2cc"/><path d="M13 4l-7 7h4l-2 6 7-8h-4z" fill="#ef8a1b"/></symbol>
        <symbol id="tray-flag" viewBox="0 0 20 20"><path d="M4 3v15" stroke="#fff" stroke-width="2"/><path d="M5 3h10v8H5z" fill="#fff"/><circle cx="13" cy="14" r="4.500" fill="#d4342c"/><path d="M11 12l4 4M15 12l-4 4" stroke="#fff" stroke-width="1.300"/></symbol>
        <symbol id="tray-battery" viewBox="0 0 20 20"><path d="M9 5h7v12H9zM11 3h3" fill="none" stroke="#fff" stroke-width="1.800"/><path d="M11 11h3v4h-3z" fill="#fff"/><path d="M2 3v4h4V3M4 7v10" stroke="#fff" fill="none" stroke-width="1.600"/></symbol>
        <symbol id="tray-net" viewBox="0 0 20 20"><rect x="7" y="4" width="11" height="8" fill="none" stroke="#fff" stroke-width="1.600"/><path d="M12 12v4M8 17h9M2 3h4v5H2zM4 8v8h3" stroke="#fff" fill="none" stroke-width="1.500"/></symbol>
        <symbol id="tray-volume" viewBox="0 0 20 20"><path d="M2 8h3l5-5v14l-5-5H2z" fill="#fff"/><path d="M12 7c2 2 2 4 0 6M14 5c3 3 3 7 0 10M16.500 3c4 4 4 10 0 14" stroke="#fff" fill="none" stroke-width="1.200"/></symbol>
    </svg>

    <header class="titlebar">
        <svg class="app-icon"><use href="#catia"/></svg>
        <h1>CATIA V5 - [Butterfly Valve.CATProduct]</h1>
        <div class="window-buttons">
            <button aria-label="Minimize"><svg viewBox="0 0 12 12"><path d="M2 9h8" stroke="#3a2a08" stroke-width="2"/></svg></button>
            <button aria-label="Restore"><svg viewBox="0 0 12 12"><path d="M1 4h7v7H1zM4 4V1h7v7H8" fill="none" stroke="#3a2a08" stroke-width="1.500"/></svg></button>
            <button class="close" aria-label="Close"><svg viewBox="0 0 12 12"><path d="M3 3l6 6M9 3L3 9" stroke="#fff" stroke-width="1.800"/></svg></button>
        </div>
    </header>

    <nav class="menubar">
        <svg class="doc-icon"><use href="#catia"/></svg>
        <a class="start" href="#"><u>S</u>tart</a>
        <a class="enovia" href="#">ENOVIA V5 VPM</a>
        <a href="#"><u>F</u>ile</a>
        <a href="#"><u>E</u>dit</a>
        <a href="#"><u>V</u>iew</a>
        <a href="#"><u>I</u>nsert</a>
        <a href="#"><u>T</u>ools</a>
        <a href="#"><u>A</u>nalyze</a>
        <a href="#"><u>W</u>indow</a>
        <a href="#"><u>H</u>elp</a>
        <div class="doc-buttons">
            <button aria-label="Minimize document"><svg viewBox="0 0 12 12"><path d="M3 9h6" stroke="#5b6f92" stroke-width="2"/></svg></button>
            <button aria-label="Restore document"><svg viewBox="0 0 12 12"><path d="M2 5h6v5H2zM4 5V2h6v5H8" fill="none" stroke="#5b6f92" stroke-width="1.400"/></svg></button>
            <button aria-label="Close document"><svg viewBox="0 0 12 12"><path d="M3 3l6 6M9 3L3 9" stroke="#5b6f92" stroke-width="2"/></svg></button>
        </div>
    </nav>

    <div class="toolbar top">
        <div class="group props">
            <label class="combo well"><span class="swatch"></span><select aria-label="Fill color"><option></option></select><i></i></label>
            <label class="combo"><select aria-label="Transparency"><option>Auto</option></select><i></i></label>
            <label class="combo"><select aria-label="Line thickness"><option>Auto</option></select><i></i></label>
            <label class="combo"><select aria-label="Line type"><option>Auto</option></select><i></i></label>
            <label class="combo short"><select aria-label="Point symbol"><option>Auto</option></select><i></i></label>
            <label class="combo short disabled"><select aria-label="Rendering style" disabled><option>Auto</option></select><i></i></label>
            <label class="combo"><select aria-label="Layer"><option>None</option></select><i></i></label>
        </div>
        <div class="icons painters">
            <button aria-label="Painter"><svg><use href="#brush"/></svg></button>
            <button aria-label="Wizard"><svg><use href="#wand"/></svg></button>
        </div>
        <div class="group">
            <button aria-label="Publish"><svg><use href="#bowtie"/></svg></button>
            <button aria-label="Unpublish"><svg><use href="#bowtie-x"/></svg></button>
        </div>
        <div class="group wide">
            <button aria-label="Render"><svg class="big"><use href="#render"/></svg></button>
        </div>
        <div class="group">
            <button aria-label="Component"><svg><use href="#gears"/></svg></button>
            <button aria-label="Product"><svg><use href="#gear-doc"/></svg></button>
            <button aria-label="Part"><svg><use href="#gear-doc2"/></svg></button>
            <button aria-label="Existing component"><svg><use href="#doc-arrow"/></svg></button>
            <button aria-label="Existing component with positioning"><svg><use href="#doc-arrow2"/></svg></button>
            <button aria-label="Replace component"><svg><use href="#reorder"/></svg></button>
            <button aria-label="Graph tree reordering"><svg><use href="#list-red"/></svg></button>
            <button aria-label="Generate numbering"><svg><use href="#numbering"/></svg></button>
            <button aria-label="Selective load"><svg><use href="#tree-yellow"/></svg></button>
            <button aria-label="Manage representations"><svg><use href="#tree-blue"/></svg></button>
            <button class="drop" aria-label="Multi-instantiation"><svg><use href="#multi"/></svg></button>
        </div>
        <div class="group">
            <button aria-label="Save in vault"><svg><use href="#store"/></svg></button>
            <button aria-label="Send to vault"><svg><use href="#store-arrow"/></svg></button>
            <button aria-label="Synchronize"><svg><use href="#store-sync"/></svg></button>
        </div>
        <div class="group">
            <button aria-label="Manipulation"><svg><use href="#hand"/></svg></button>
            <button class="drop" aria-label="Snap"><svg><use href="#hand-ball"/></svg></button>
            <button aria-label="Explode"><svg><use href="#explode"/></svg></button>
            <button aria-label="Stop on clash"><svg><use href="#clash"/></svg></button>
        </div>
        <div class="group">
            <button aria-label="Open"><svg><use href="#folder"/></svg></button>
            <label class="combo file disabled"><select aria-label="File" disabled><option>File</option></select><i></i></label>
        </div>
    </div>

    <main>
        <section class="viewport">
            <ul class="tree">
                <li class="root"><svg class="node"><use href="#tree-product"/></svg><span>Butterfly Valve</span></li>
                <li><button class="toggle" aria-label="Expand"></button><svg class="node"><use href="#tree-part"/></svg><span>Body (Body.1)</span></li>
                <li><button class="toggle" aria-label="Expand"></button><svg class="node"><use href="#tree-part"/></svg><span>Shaft (Shaft.1)</span></li>
                <li><button class="toggle" aria-label="Expand"></button><svg class="node"><use href="#tree-part"/></svg><span>Retainer (Retainer.1)</span></li>
                <li><button class="toggle" aria-label="Expand"></button><svg class="node"><use href="#tree-part"/></svg><span>Arm (Arm.1)</span></li>
                <li><button class="toggle" aria-label="Expand"></button><svg class="node"><use href="#tree-part"/></svg><span>Nut (Nut.1)</span></li>
                <li><button class="toggle" aria-label="Expand"></button><svg class="node"><use href="#tree-part"/></svg><span>Screw (Screw.1)</span></li>
                <li><button class="toggle" aria-label="Expand"></button><svg class="node"><use href="#tree-part"/></svg><span>Screw (Screw.2)</span></li>
                <li><button class="toggle" aria-label="Expand"></button><svg class="node"><use href="#tree-part"/></svg><span>Screw (Screw.3)</span></li>
                <li><button class="toggle" aria-label="Expand"></button><svg class="node"><use href="#tree-part"/></svg><span>Plate (Plate.1)</span></li>
                <li><button class="toggle" aria-label="Expand"></button><svg class="node"><use href="#tree-constraints"/></svg><span>Constraints</span></li>
                <li class="last"><span>Applications</span></li>
            </ul>

            <svg class="model" viewBox="350 110 550 510" fill="none" stroke="#0a0a0a" stroke-width="1.500" stroke-linejoin="round">
                <defs>
                    <linearGradient id="cyl" gradientUnits="userSpaceOnUse" x1="395" y1="215" x2="450" y2="290"><stop offset="0" stop-color="#fff"/><stop offset=".35" stop-color="#d8d8d8"/><stop offset=".75" stop-color="#858585"/><stop offset="1" stop-color="#a4a4a4"/></linearGradient>
                    <linearGradient id="pin" gradientUnits="userSpaceOnUse" x1="388" y1="262" x2="404" y2="290"><stop offset="0" stop-color="#777"/><stop offset="1" stop-color="#fff"/></linearGradient>
                    <linearGradient id="housing" gradientUnits="userSpaceOnUse" x1="535" y1="365" x2="620" y2="520"><stop offset="0" stop-color="#fff"/><stop offset=".35" stop-color="#d8d8d8"/><stop offset=".75" stop-color="#828282"/><stop offset="1" stop-color="#a8a8a8"/></linearGradient>
                    <linearGradient id="bore" gradientUnits="userSpaceOnUse" x1="640" y1="260" x2="756" y2="235"><stop offset="0" stop-color="#808080"/><stop offset="1" stop-color="#c2c2c2"/></linearGradient>
                    <linearGradient id="body" gradientUnits="userSpaceOnUse" x1="610" y1="540" x2="690" y2="520"><stop offset="0" stop-color="#b4b4b4"/><stop offset="1" stop-color="#808080"/></linearGradient>
                    <linearGradient id="rim" gradientUnits="userSpaceOnUse" x1="500" y1="380" x2="615" y2="540"><stop offset="0" stop-color="#b48c58"/><stop offset=".3" stop-color="#c09a62"/><stop offset=".7" stop-color="#6e5b3a"/><stop offset="1" stop-color="#6a5838"/></linearGradient>
                    <linearGradient id="hub" gradientUnits="userSpaceOnUse" x1="465" y1="450" x2="535" y2="540"><stop offset="0" stop-color="#fff"/><stop offset=".5" stop-color="#a5a5a5"/><stop offset="1" stop-color="#929292"/></linearGradient>
                    <linearGradient id="lug" x1="0" y1="0" x2="1" y2="0"><stop offset="0" stop-color="#808080"/><stop offset=".35" stop-color="#a4a4a4"/><stop offset=".7" stop-color="#808080"/></linearGradient>
                    <linearGradient id="hole" x1="0" y1="0" x2="1" y2="0"><stop offset="0" stop-color="#808080"/><stop offset=".6" stop-color="#adadad"/><stop offset="1" stop-color="#8c8c8c"/></linearGradient>
                    <linearGradient id="boss" gradientUnits="userSpaceOnUse" x1="806" y1="248" x2="835" y2="275"><stop offset="0" stop-color="#c8c8c8"/><stop offset=".3" stop-color="#ededed"/><stop offset="1" stop-color="#858585"/></linearGradient>
                    <linearGradient id="dome" x1="0" y1="0" x2="1" y2="1"><stop offset="0" stop-color="#fff"/><stop offset="1" stop-color="#909090"/></linearGradient>
                    <clipPath id="bore-clip"><ellipse cx="651" cy="275" rx="107" ry="74" transform="rotate(-15 651 275)"/></clipPath>
                </defs>

                <!-- right lug -->
                <path d="M882 297L888 323C891 345 877 358 865 366L837 385 825 360 865 337z" fill="#8c8c8c"/>
                <path d="M836 273C860 268 880 284 882 300 884 318 875 330 865 337L831 361 815 290z" fill="#f2f2f2"/>
                <path d="M822 290C845 284 859 297 859 308 858 322 845 333 824 334z" fill="url(#hole)"/>
                <path d="M821 317C833 311 845 311 857 315 851 327 838 334 824 334z" fill="#3d3c6c"/>
                <path d="M852 294l5 20M865 337l5 24"/>

                <!-- shaft boss at the back -->
                <path d="M798 235L812 232C825 240 838 258 839 272 838 281 830 285 822 290L795 300z" fill="url(#boss)"/>
                <path d="M812 288l26-18"/>

                <!-- body -->
                <path d="M508 320L802 240C804 262 803 278 812 288L821 290 821 317 831 361 837 385C850 425 846 462 813 494 770 535 690 565 610 546L540 440z" fill="url(#body)" stroke="none"/>
                <path d="M840 395C850 430 842 465 813 494Q798 510 777 524M668 555Q640 555 608 546"/>
                <path d="M472 294L501 298 504 322 478 319z" fill="#8a8a8a"/>

                <!-- shaft housing -->
                <path d="M508 326Q508 340 513 350C525 366 545 376 570 391L642 437 627 387 520 340z" fill="#8f8f8f"/>
                <path d="M493 362L510 348C525 364 545 376 570 391L642 437Q650 458 662 464C670 490 660 508 637 524L608 546 545 480z" fill="url(#housing)" stroke="none"/>
                <path d="M510 345C525 364 545 376 570 391L642 437M662 464C670 490 660 508 637 524M663 473l-47 34"/>

                <!-- retainer -->
                <path d="M498 371C560 388 608 470 618 520 620 545 610 560 582 564L508 400z" fill="url(#rim)"/>
                <path d="M506 401C555 425 590 490 598 537 600 560 588 568 572 563 558 560 545 553 535 543L500 440z" fill="#8a7349"/>
                <path d="M508 396l16-13"/>
                <path d="M540 458C560 475 568 500 565 513 560 525 550 535 535 543L514 560 490 470z" fill="url(#hub)" stroke="none"/>
                <path d="M540 458C560 475 568 500 565 513Q560 524 548 534"/>
                <path d="M523 438C525 431 530 428 536 431 544 437 550 448 549 455 543 460 537 460 531 456z" fill="url(#dome)"/>
                <path d="M530 454q10 3 18-2M533 459q8 2 13-2"/>
                <path d="M548 541C547 533 550 527 556 528 565 531 572 543 573 554 566 560 556 555 550 548z" fill="url(#dome)"/>
                <path d="M552 550C549 542 551 535 558 531M555 549q-2-8 6-13M555 548l11-10"/>

                <!-- flange face -->
                <path d="M627 387L643 443C655 465 680 471 700 468 735 462 750 442 750 427L743 397z" fill="url(#lug)"/>
                <path d="M846 155L852 182C853 200 842 208 833 214L802 240 793 218z" fill="url(#lug)"/>
                <path d="M535 220A153.500 106 -15 0 1 722 169L760 141C785 123 820 123 838 140 853 158 846 182 830 193L793 218A153.500 106 -15 0 1 733 357L742 392C746 425 717 444 683 445 660 444 643 436 639 428L627 387A153.500 106 -15 0 1 501 298L472 294 455 219Q480 211 500 216z" fill="#f2f2f2"/>
                <path d="M830 193l5 21"/>

                <!-- bore -->
                <g clip-path="url(#bore-clip)">
                    <rect x="540" y="190" width="220" height="170" fill="url(#bore)" stroke="none"/>
                    <path d="M730 215L760 200 760 292 745 277z" fill="#a2a2a2" stroke="none"/>
                    <path d="M578 343C600 312 640 283 690 284 715 283 735 287 752 293L730 370 590 370z" fill="#000"/>
                    <path d="M730 215l15 62M727 287q-1-12 7-13 9 1 20 12M729 286v-9"/>
                </g>
                <ellipse cx="651" cy="275" rx="107" ry="74" transform="rotate(-15 651 275)"/>

                <!-- lug holes -->
                <ellipse cx="689" cy="405" rx="32" ry="22" transform="rotate(-15 689 405)" fill="url(#hole)"/>
                <path d="M668 424C676 407 700 403 717 411 710 422 685 434 668 424z" fill="#808080" stroke="none"/>
                <path d="M668 424C676 407 700 403 717 411M684 383l5 24"/>
                <ellipse cx="689" cy="405" rx="32" ry="22" transform="rotate(-15 689 405)"/>
                <ellipse cx="792" cy="167" rx="32" ry="22" transform="rotate(-15 792 167)" fill="url(#hole)"/>
                <path d="M770 184C782 167 803 165 820 173 810 189 790 194 770 184z" fill="#3a3969"/>
                <path d="M815 150l4 22M817 149q5 10 4 18"/>
                <path d="M466 232C485 228 503 238 503 250 502 264 488 275 470 277z" fill="#969696"/>
                <path d="M475 255Q489 253 499 259C494 270 482 276 471 277z" fill="#3c3b6b"/>

                <!-- lower lug -->
                <path d="M666 545L680 592C690 612 715 615 735 612 770 604 788 582 786 562L779 538z" fill="url(#lug)"/>
                <path d="M663 532Q720 530 769 502L779 540C779 570 750 586 717 589 692 588 677 580 673 568z" fill="#f2f2f2"/>
                <ellipse cx="726" cy="549" rx="32" ry="22" transform="rotate(-15 726 549)" fill="url(#hole)"/>
                <path d="M703 567C715 550 737 548 755 555 745 571 722 577 703 567z" fill="#6d6a91"/>
                <path d="M720 528l5 24"/>

                <!-- arm -->
                <path d="M432 480C430 462 440 450 457 450 475 451 500 475 520 503L547 517 520 556 507 563z" fill="url(#hub)" stroke="none"/>
                <path d="M432 480C430 462 440 450 457 450 475 451 500 475 520 503"/>
                <path d="M397 303L445 455Q450 450 462 450C485 455 505 480 520 503L442 285 425 310z" fill="#a9a9a9"/>
                <path d="M408 309L443 430C460 431 480 442 497 461L447 325 411 311"/>
                <path d="M412 312L446 428C465 430 482 440 494 456" stroke-width="1"/>
                <path d="M461 270L441 285 520 503 527 522 547 506z" fill="#808080"/>
                <path d="M368 236L412 197C422 193 428 197 431 200 455 218 475 245 476 262L474 274 461 270 442 285 441 293 422 312z" fill="url(#cyl)" stroke="none"/>
                <path d="M441 295V285L461 270M474 274C480 245 455 218 431 200 424 195 418 194 412 197L368 236M384 237l47-38M441 293l-14 11"/>
                <ellipse cx="394" cy="272" rx="46" ry="24" transform="rotate(56 394 272)" fill="#a9a9a9"/>
                <ellipse cx="393" cy="273" rx="23" ry="12" transform="rotate(56 393 273)" fill="url(#pin)"/>
                <path d="M400 289l9-7"/>
                <ellipse cx="473" cy="512" rx="61" ry="30" transform="rotate(56 473 512)" fill="#a9a9a9"/>
                <path d="M459 467l13-11"/>

                <!-- nut -->
                <path d="M428 497L437 484Q448 479 464 483L493 512 502 545 475 559Q465 560 455 552L432 525Q426 512 428 497z" fill="#a47f4c"/>
                <path d="M493 512Q482 516 478 527V550L483 556 502 545z" fill="#6a5635"/>
                <path d="M428 497Q443 500 452 493L464 483M452 493Q454 510 464 520 472 527 480 524"/>
                <ellipse cx="452" cy="530" rx="29" ry="18" transform="rotate(56 452 530)" fill="#8d7145"/>
                <ellipse cx="451" cy="528" rx="20" ry="12" transform="rotate(56 451 528)" fill="#d8d8d8"/>
                <ellipse cx="449" cy="530" rx="18" ry="10" transform="rotate(56 449 530)" fill="#a9a9a9"/>
            </svg>

            <div class="overlays">
                <svg class="compass" viewBox="1170 100 90 120">
                    <path d="M1210 163L1178 141C1176 130 1182 124 1190 124 1197 125 1202 130 1202 130 1215 120 1235 118 1246 136L1210 163z" fill="#15135a" fill-opacity=".8" stroke="#d6d4f4" stroke-width="2"/>
                    <path d="M1182 193C1190 160 1240 154 1252 186L1215 216z" fill="#1f4b66" stroke="#d6d4f4" stroke-width="2"/>
                    <path d="M1200 122l16 66" stroke="#e4e2fa" stroke-width="2"/>
                    <circle cx="1199" cy="122" r="3.500" fill="#c9c6f4"/>
                    <circle cx="1216" cy="190" r="5" fill="#f00000"/>
                    <text x="1200" y="113">z</text><text x="1181" y="132">y</text><text x="1243" y="127">x</text>
                </svg>
                <svg class="axes" viewBox="1272 618 46 30">
                    <path d="M1279 636l12 9 21-14M1291 645l-3-13" fill="none" stroke="#e8e8f4"/>
                    <text x="1275" y="638">y</text><text x="1286" y="631">z</text><text x="1308" y="633">x</text>
                </svg>
            </div>
            <span class="bubble"></span>
        </section>

        <aside class="sidebar">
            <div class="group"><button aria-label="Assembly"><svg><use href="#dark-gears"/></svg></button></div>
            <div class="group"><button aria-label="PCS"><svg><use href="#pcs"/></svg></button></div>
            <div class="group scenes">
                <button aria-label="Scene 1"><svg><use href="#ghost"/></svg></button>
                <button aria-label="Scene 2"><svg><use href="#ghost-arrow"/></svg></button>
                <button aria-label="Scene 3"><svg><use href="#ghost"/></svg></button>
                <button aria-label="Scene 4"><svg><use href="#ghost"/></svg></button>
            </div>
            <div class="group"><button class="drop" aria-label="Selection set"><svg><use href="#select-gear"/></svg></button></div>
            <div class="group"><button class="drop" aria-label="Select"><svg><use href="#pointer"/></svg></button></div>
            <div class="group constraints">
                <button aria-label="Coincidence"><svg><use href="#coincidence"/></svg></button>
                <button aria-label="Contact"><svg><use href="#contact"/></svg></button>
                <button aria-label="Offset"><svg><use href="#offset"/></svg></button>
                <button aria-label="Angle"><svg><use href="#angle"/></svg></button>
                <button aria-label="Fix"><svg><use href="#anchor"/></svg></button>
                <button aria-label="Fix together"><svg><use href="#clip"/></svg></button>
                <button aria-label="Quick constraint"><svg><use href="#quick"/></svg></button>
                <button aria-label="Flexible"><svg><use href="#flexible"/></svg></button>
            </div>
            <span class="more">»</span>
        </aside>
    </main>

    <div class="toolbar bottom">
        <div class="group">
            <button aria-label="New"><svg><use href="#new"/></svg></button>
            <button aria-label="Open"><svg><use href="#folder"/></svg></button>
            <button aria-label="Save"><svg><use href="#save"/></svg></button>
            <button aria-label="Print"><svg><use href="#print"/></svg></button>
            <button aria-label="Cut"><svg><use href="#cut"/></svg></button>
            <button aria-label="Copy"><svg><use href="#copy"/></svg></button>
            <button aria-label="Paste"><svg><use href="#paste"/></svg></button>
            <button class="drop" aria-label="Undo"><svg><use href="#undo"/></svg></button>
            <button class="drop" aria-label="Redo"><svg><use href="#redo"/></svg></button>
            <button aria-label="What's this"><svg><use href="#whats"/></svg></button>
        </div>
        <div class="group">
            <button aria-label="Formula"><svg><use href="#fx"/></svg></button>
            <button aria-label="Comment"><svg><use href="#comment"/></svg></button>
            <button class="narrow" aria-label="Link"><svg><use href="#lock-sm"/></svg></button>
            <button class="drop" aria-label="Design table"><svg><use href="#table"/></svg></button>
            <button aria-label="Relations"><svg><use href="#graph"/></svg></button>
            <button class="drop" aria-label="Lock"><svg><use href="#lock"/></svg></button>
            <button aria-label="Equivalent dimensions"><svg><use href="#equiv"/></svg></button>
        </div>
        <div class="group wide">
            <button aria-label="Fly mode"><svg><use href="#fly"/></svg></button>
            <button aria-label="Fit all in"><svg><use href="#fit"/></svg></button>
            <button aria-label="Pan"><svg><use href="#pan"/></svg></button>
            <button aria-label="Rotate"><svg><use href="#rotate"/></svg></button>
            <button aria-label="Zoom in"><svg><use href="#zoom-in"/></svg></button>
            <button aria-label="Zoom out"><svg><use href="#zoom-out"/></svg></button>
            <button aria-label="Normal view"><svg><use href="#normal"/></svg></button>
            <button aria-label="Multi-view"><svg><use href="#views"/></svg></button>
            <button class="drop" aria-label="Isometric view"><svg><use href="#cube"/></svg></button>
            <button class="drop" aria-label="Shading"><svg><use href="#shading"/></svg></button>
            <button aria-label="Hide/Show"><svg><use href="#hide"/></svg></button>
            <button aria-label="Swap visible space"><svg><use href="#swap"/></svg></button>
        </div>
        <div class="group"><button aria-label="Capture"><svg><use href="#camera"/></svg></button></div>
        <div class="group"><button aria-label="Catalog"><svg><use href="#catalog"/></svg></button></div>
        <div class="group">
            <button aria-label="Measure between"><svg><use href="#measure"/></svg></button>
            <button aria-label="Measure item"><svg><use href="#caliper"/></svg></button>
            <button aria-label="Measure inertia"><svg><use href="#weight"/></svg></button>
        </div>
        <div class="group"><button aria-label="Update"><svg><use href="#swirl"/></svg></button></div>
        <div class="group"><button aria-label="Catalog browser"><svg><use href="#book"/></svg></button></div>
        <div class="group">
            <button aria-label="Clash"><svg><use href="#star-cube"/></svg></button>
            <button aria-label="Sectioning"><svg><use href="#sphere"/></svg></button>
            <button aria-label="Distance analysis"><svg><use href="#blocks"/></svg></button>
        </div>
        <div class="group tail"><span class="more">»</span></div>
        <div class="brand">
            <svg viewBox="0 0 40 26" fill="none" stroke-width="2.500"><path d="M10 3q8-3 9 0 0 3-6 6" stroke="#d4293a"/><path d="M8 12q10-3 9 3-2 7-14 9L10 13" stroke="#3a3487"/><path d="M29 9q-8-1-8 3 0 2 3 4 3 5-9 7" stroke="#e0a13c"/></svg>
            <b>CATIA</b>
        </div>
    </div>

    <div class="statusbar">
        <span>Select an object or a command</span>
        <input type="text" aria-label="Power input">
        <button aria-label="Command list"><svg viewBox="0 0 16 16"><path d="M2 2h9v8H2zM13 5v8H6" fill="none" stroke="#8c8ca2" stroke-width="1.300"/><path d="M3 11h9M14 5v9H6" fill="none" stroke="#fff"/></svg></button>
        <button aria-label="Macro"><svg viewBox="0 0 16 16"><circle cx="8" cy="7" r="4.500" fill="none" stroke="#8c8ca2" stroke-width="1.300"/><path d="M8 5v5M2 13h12M13 4v9" stroke="#8c8ca2" stroke-width="1.300"/><path d="M2 14h13" stroke="#fff"/></svg></button>
    </div>

    <footer class="taskbar">
        <button class="win" aria-label="Start"><svg><use href="#windows"/></svg></button>
        <button class="running stack explorer" aria-label="File Explorer"><svg><use href="#explorer"/></svg></button>
        <button aria-label="Chrome"><svg><use href="#chrome"/></svg></button>
        <button aria-label="Firefox"><svg><use href="#firefox"/></svg></button>
        <button aria-label="SolidWorks"><svg><use href="#solidworks"/></svg></button>
        <button aria-label="Ansys"><svg><use href="#ansys"/></svg></button>
        <button aria-label="Hotspot"><svg><use href="#wifi"/></svg></button>
        <button aria-label="uTorrent"><svg><use href="#utorrent"/></svg></button>
        <button aria-label="Viewer"><svg><use href="#eye"/></svg></button>
        <button aria-label="Window manager"><svg><use href="#window"/></svg></button>
        <button aria-label="Excel"><svg><use href="#excel"/></svg></button>
        <button aria-label="PowerPoint"><svg><use href="#powerpoint"/></svg></button>
        <button aria-label="Word"><svg><use href="#word"/></svg></button>
        <button class="running" aria-label="Sticky Notes"><svg><use href="#notes"/></svg></button>
        <button aria-label="Photoshop"><svg><use href="#photoshop"/></svg></button>
        <button aria-label="Download Manager"><svg><use href="#idm"/></svg></button>
        <button class="running stack lime" aria-label="Media player"><svg><use href="#disc"/></svg></button>
        <button class="running" aria-label="Chrome window"><svg><use href="#chrome"/></svg></button>
        <button class="running active" aria-label="CATIA"><svg><use href="#catia"/></svg></button>
        <button aria-label="Flash"><svg><use href="#flash"/></svg></button>
        <div class="tray">
            <svg><use href="#wifi"/></svg>
            <span class="up">▲</span>
            <svg><use href="#tray-flag"/></svg>
            <svg><use href="#tray-battery"/></svg>
            <svg><use href="#tray-net"/></svg>
            <svg><use href="#tray-volume"/></svg>
            <span class="lang">ENG</span>
            <time>10:49 PM</time>
        </div>
    </footer>
</body>
</html>
```

FILE: styles.css
```
* {
    box-sizing: border-box;
}
body {
    margin: 0;
    height: 100vh;
    display: flex;
    flex-direction: column;
    overflow: hidden;
    font-family: "Open Sans", "Noto Sans", sans-serif;
    font-size: 12px;
    color: #222;
    background: #d0cfe8;
}
button {
    padding: 0;
    border: none;
    background: none;
    display: flex;
    align-items: center;
    justify-content: center;
}
a {
    color: inherit;
    text-decoration: none;
}
.sprite {
    position: absolute;
    width: 0;
    height: 0;
}

/* title bar */
.titlebar {
    display: flex;
    height: 24px;
    background: #f0c869;
    border-bottom: 1px solid #c9aa66;
}
.app-icon {
    width: 14px;
    height: 14px;
    margin: 5px 0 0 3px;
    border: 1px solid #fff;
}
.titlebar h1 {
    flex: 1;
    margin: 0;
    padding-left: 83px;
    text-align: center;
    font-size: 14px;
    font-weight: 400;
    line-height: 23px;
    color: #4f3b12;
}
.window-buttons {
    display: flex;
    align-items: flex-start;
}
.window-buttons button {
    width: 26px;
    height: 19px;
}
.window-buttons svg {
    width: 12px;
    height: 12px;
}
.window-buttons .close {
    width: 45px;
    margin: 0 3px 0 1px;
    background: #c9504b;
}

/* menu */
.menubar {
    display: flex;
    align-items: center;
    height: 19px;
    background: #d0cfe8;
}
.menubar a {
    padding: 0 11px;
    line-height: 18px;
}
.doc-icon {
    width: 18px;
    height: 16px;
    margin: 0 3px 0 1px;
}
.menubar .start {
    padding: 0 13px 0 6px;
    background: #fde5b8;
}
.menubar .enovia {
    padding: 0 3px 0 8px;
}
.doc-buttons {
    display: flex;
    margin-left: auto;
    gap: 2px;
}
.doc-buttons button {
    width: 18px;
    height: 17px;
    background: #e3edf8;
    border: 1px solid #b3c2da;
}
.doc-buttons svg {
    width: 11px;
    height: 11px;
}

/* toolbars */
.toolbar {
    display: flex;
    align-items: flex-start;
    height: 37px;
    background: linear-gradient(#fff 0, #fff 2px, #e4e4f2 8px, #cfcee6 22px, #c2c1d6 28px, #9d9cb2 35px, #55556a 36px);
}
.group,
.icons {
    display: flex;
    gap: 6px;
    height: 36px;
    padding-top: 8px;
}
.toolbar .group {
    margin-right: 17px;
}
.group::before {
    content: "";
    width: 2px;
    height: 18px;
    margin: -5px 2px 0 0;
    border-left: 1px solid #fff;
    border-right: 1px solid #a9a9bd;
    background: #fff;
}
.group button,
.icons button {
    position: relative;
    width: 22px;
    height: 22px;
}
.group button svg,
.icons button svg {
    flex: none;
    width: 22px;
    height: 22px;
}
.group button .big {
    width: 26px;
}
.drop::after {
    content: "";
    position: absolute;
    right: -5px;
    bottom: -5px;
    border: 4px solid transparent;
    border-top-color: #111;
    border-bottom: 0;
}
.toolbar.top {
    padding-left: 7px;
}
.toolbar .props {
    gap: 5px;
    margin-right: 4px;
}
.painters {
    margin: 0 16px 0 0;
}
.toolbar.top .wide {
    margin-right: 46px;
}
.toolbar.bottom {
    padding-left: 5px;
}
.toolbar.bottom .group {
    margin-right: 13px;
}
.toolbar.bottom .group.wide {
    margin-right: 32px;
}
.toolbar.bottom .drop {
    margin-right: 2px;
}
.group .narrow,
.group .narrow svg {
    width: 16px;
}

/* drop-downs */
.combo {
    display: flex;
    width: 62px;
    height: 22px;
    background: #fff;
    border: 2px solid;
    border-color: #7e7e8c #e8e8f0 #e8e8f0 #7e7e8c;
}
.combo select {
    appearance: none;
    flex: 1;
    min-width: 0;
    padding: 0 0 0 2px;
    border: none;
    background: none;
    font: inherit;
    color: #222;
    opacity: 1;
}
.combo i {
    flex: 0 0 15px;
    display: flex;
    align-items: center;
    justify-content: center;
    background: #d6d5ea;
    border-right: 1px solid #77778a;
    border-bottom: 1px solid #77778a;
}
.combo i::before {
    content: "";
    border: 4px solid transparent;
    border-top-color: #111;
    border-bottom: 0;
}
.combo.short {
    width: 40px;
}
.combo.disabled {
    background: #dedde8;
}
.combo.disabled select {
    color: #8d8d99;
}
.combo.disabled i::before {
    border-top-color: #8d8d99;
}
.combo.file {
    width: 73px;
}
.combo .swatch {
    width: 34px;
    margin: 2px 0 0 4px;
    border-top: 2px solid #7e7e8c;
    border-left: 2px solid #7e7e8c;
}

/* 3D view */
main {
    flex: 1;
    min-height: 0;
    display: flex;
}
.viewport {
    position: relative;
    flex: 1;
    display: grid;
    grid-template-columns: 350px minmax(0, 550px) minmax(0, 1fr);
    background: linear-gradient(#343365 0%, #3f3e70 45%, #454475 65%, #5a587f 74%, #8583a2 87%, #abaac4 100%);
    box-shadow: inset 2px 0 #9696a6;
}
.model {
    width: 100%;
    margin-top: 30px;
}
.tree {
    margin: 0;
    padding: 27px 0 0;
    list-style: none;
    font-family: "Noto Sans", sans-serif;
    font-size: 13px;
    line-height: 18px;
    color: #fff;
}
.tree li {
    display: flex;
    align-items: center;
    height: 27px;
    background: linear-gradient(#fff, #fff) 9px 0 / 2px 100% no-repeat;
}
.tree .toggle {
    position: relative;
    flex: 0 0 22px;
    height: 22px;
    background: linear-gradient(#fff, #fff) 14px 9px / 7px 2px no-repeat;
}
.tree .toggle::before {
    content: "";
    position: absolute;
    left: 4px;
    top: 4px;
    width: 12px;
    height: 12px;
    border-radius: 50%;
    background:
        linear-gradient(#000, #000) center / 10px 4px no-repeat,
        linear-gradient(#000, #000) center / 4px 10px no-repeat,
        #85858f;
}
.tree .node {
    width: 22px;
    height: 22px;
}
.tree span {
    margin-left: 2px;
    padding: 0 2px 0 1px;
    background: #35346a;
}
.tree .root {
    padding-left: 3px;
    background: linear-gradient(#fff, #fff) 9px 20px / 2px 7px no-repeat;
}
.tree .root span {
    background: #ff8000;
}
.tree .last {
    padding-left: 18px;
    background: linear-gradient(#fff, #fff) 9px 0 / 2px 13px no-repeat, linear-gradient(#fff, #fff) 9px 12px / 12px 2px no-repeat;
}
.overlays {
    display: flex;
    flex-direction: column;
    justify-content: space-between;
    align-items: flex-end;
    padding: 20px 11px 29px 0;
}
.overlays text {
    font: 13px "Liberation Sans", sans-serif;
}
.compass {
    width: 90px;
    height: 120px;
    margin-right: 58px;
}
.compass text {
    fill: #e6d44c;
}
.axes {
    width: 46px;
    height: 30px;
}
.axes text {
    fill: #f0f0fa;
}
.bubble {
    position: absolute;
    left: -34px;
    bottom: 56px;
    width: 49px;
    height: 49px;
    border-radius: 50%;
    border: 2px solid #e6f5dc;
    background: radial-gradient(#5fc32a, #2f9a12);
}

/* right toolbar */
.sidebar {
    width: 37px;
    display: flex;
    flex-direction: column;
    gap: 15px;
    padding: 3px 0 0 2px;
    border-left: 4px solid #fff;
    background: linear-gradient(90deg, #dcdcee, #d0cfe8 60%, #b5b4cc);
}
.sidebar .group {
    flex-direction: column;
    height: auto;
    padding: 0 0 0 2px;
}
.sidebar .group::before {
    width: 18px;
    height: 2px;
    margin: 0 0 3px -5px;
    border: none;
    border-bottom: 1px solid #a9a9bd;
}
.sidebar .scenes {
    margin-top: -4px;
}
.sidebar .constraints {
    margin-top: 4px;
}
.more {
    color: #9a9ab0;
    font-size: 12px;
    line-height: 10px;
}
.sidebar .more {
    margin-left: 19px;
}

/* brand */
.toolbar .tail {
    margin: 0;
}
.brand {
    display: flex;
    flex: none;
    flex-direction: column;
    align-items: center;
    margin-left: auto;
    width: 48px;
    height: 36px;
}
.brand svg {
    width: 40px;
    height: 25px;
    flex: none;
}
.brand b {
    font: italic bold 10px/10px "Liberation Sans", sans-serif;
    color: #3a3487;
}

/* status bar */
.statusbar {
    display: flex;
    align-items: center;
    height: 24px;
    padding: 0 0 0 3px;
    background: #d0cfe8;
}
.statusbar input {
    width: 299px;
    height: 19px;
    margin-left: auto;
    border: 2px solid;
    border-color: #77778a #fff #fff #77778a;
    background: #fff;
}
.statusbar button {
    width: 32px;
    height: 22px;
    margin-left: 2px;
    border-right: 2px solid #9695ab;
    border-bottom: 1px solid #9695ab;
    border-top: 1px solid #fff;
}
.statusbar svg {
    width: 15px;
    height: 15px;
}

/* taskbar */
.taskbar {
    display: flex;
    height: 30px;
    background: linear-gradient(90deg, #b9852a 0, #b8842c 35%, #a5762e 50%, #b39249 60%, #b89d63 75%, #b79b5e 86%, #b98f30 90%, #b88828 100%);
}
.taskbar button {
    width: 42px;
    margin: 0 2px;
}
.taskbar button svg {
    width: 20px;
    height: 20px;
}
.taskbar .win {
    width: 37px;
    margin: 0 2px 0 1px;
}
.taskbar .running {
    background: rgba(255, 255, 255, 0.25);
    border: 1px solid rgba(255, 255, 255, 0.4);
}
.taskbar .stack {
    box-shadow: 2px 0 #a07a35, 3px 0 #d9bf86;
}
.taskbar .explorer {
    width: 37px;
    margin: 0 8px 0 1px;
}
.taskbar .lime {
    width: 36px;
    margin-right: 8px;
    background: linear-gradient(90deg, #9aa00c, #d8e020 65%, #c2a868 68%);
}
.taskbar .active {
    background: rgba(255, 255, 255, 0.55);
    border-color: #f2e6c8;
}
.taskbar .active svg {
    width: 15px;
    height: 15px;
}
.tray {
    display: flex;
    align-items: center;
    gap: 5px;
    margin-left: auto;
    padding-right: 16px;
    color: #fff;
}
.tray svg {
    width: 19px;
    height: 19px;
}
.tray .up {
    width: 19px;
    text-align: center;
    font-size: 8px;
}
.tray .lang {
    margin-left: 5px;
}
.tray time {
    margin-left: 13px;
}
```
